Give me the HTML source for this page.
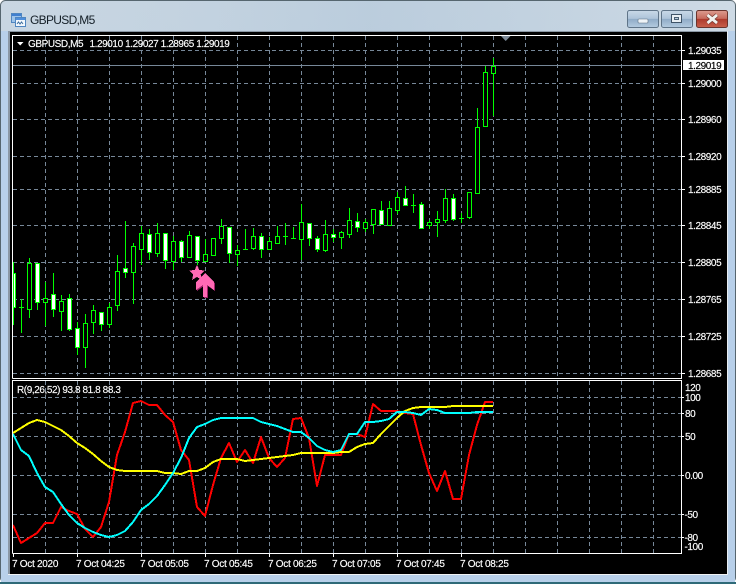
<!DOCTYPE html>
<html>
<head>
<meta charset="utf-8">
<style>
html,body{margin:0;padding:0;background:#fff;width:739px;height:584px;overflow:hidden}
svg{display:block}
text{font-family:"Liberation Sans",sans-serif;font-size:10px;fill:#fff;stroke:#fff;stroke-width:.15px;letter-spacing:-.42px}
.t{letter-spacing:-.28px}
</style>
</head>
<body>
<svg width="739" height="584" viewBox="0 0 739 584" xmlns="http://www.w3.org/2000/svg">
<defs>
<linearGradient id="tb" x1="0" y1="0" x2="0" y2="1"><stop offset="0" stop-color="#c3d2df"/><stop offset="1" stop-color="#b4cbe2"/></linearGradient>
<linearGradient id="tr" x1="0" y1="0" x2="1" y2="0"><stop offset="0" stop-color="#ffffff" stop-opacity=".1"/><stop offset=".5" stop-color="#8fb0cf" stop-opacity=".15"/><stop offset="1" stop-color="#ffffff" stop-opacity=".18"/></linearGradient>
<linearGradient id="btn" x1="0" y1="0" x2="0" y2="1"><stop offset="0" stop-color="#c9d9e8"/><stop offset=".48" stop-color="#adc3d9"/><stop offset=".5" stop-color="#8fabc7"/><stop offset="1" stop-color="#b4cbe0"/></linearGradient>
<linearGradient id="cls" x1="0" y1="0" x2="0" y2="1"><stop offset="0" stop-color="#dc9c90"/><stop offset=".48" stop-color="#c76a5c"/><stop offset=".5" stop-color="#ad3a2c"/><stop offset="1" stop-color="#c9604c"/></linearGradient>
</defs>

<!-- window -->
<rect x="0.5" y="0.5" width="735" height="582" rx="5" fill="url(#tb)" stroke="#56666f"/>
<rect x="1" y="1" width="734" height="30" fill="url(#tr)"/>
<rect x="1" y="31" width="734" height="551" fill="#b8d0ea"/>
<rect x="0" y="582" width="736" height="2" fill="#2f6a78"/>
<rect x="8" y="31" width="720" height="544" fill="#8b98a5"/>
<rect x="10" y="32" width="718" height="542" fill="#000"/>
<rect x="8" y="574" width="720" height="1" fill="#f0f2f4"/>
<rect x="727" y="31" width="1" height="544" fill="#e8edf2"/>

<!-- title icon -->
<rect x="11.5" y="13.5" width="10" height="9" fill="#9cc3ea" stroke="#4f86c0"/>
<rect x="12" y="14" width="9" height="2" fill="#3f7fd0"/>
<rect x="15.5" y="17.5" width="10" height="9" fill="#f2f8fd" stroke="#4f86c0"/>
<rect x="16" y="18" width="9" height="2" fill="#4f8fdc"/>
<path d="M17 24l1.500-2 1.500 2 1.500-2 1.500 2" fill="none" stroke="#3f6f9f"/>
<text x="30" y="24.200" style="font-size:12px;letter-spacing:-.68px;fill:#141f27;stroke:none">GBPUSD,M5</text>

<!-- buttons -->
<rect x="627.500" y="10.500" width="31" height="17" rx="2" fill="url(#btn)" stroke="#5f7488"/>
<rect x="638" y="19" width="10" height="4" rx="1" fill="#eef3f7" stroke="#5e7286" stroke-width=".6"/>
<rect x="661.500" y="10.500" width="31" height="17" rx="2" fill="url(#btn)" stroke="#5f7488"/>
<g shape-rendering="crispEdges">
<rect x="671.500" y="14.500" width="10" height="8" fill="#e9eff4" stroke="#3f5468"/>
<rect x="674.500" y="17.500" width="4" height="2" fill="#b9cbdb" stroke="#4a6074"/>
</g>
<rect x="696.500" y="10.500" width="31" height="17" rx="2" fill="url(#cls)" stroke="#6a352e"/>
<path d="M707.500 15l9.500 8M717 15l-9.500 8" stroke="#70362e" stroke-width="4.200"/>
<path d="M707.500 15l9.500 8M717 15l-9.500 8" stroke="#f1f1ee" stroke-width="2.800"/>

<!-- grid -->
<g shape-rendering="crispEdges" fill="none" stroke="#778899" stroke-width="1" stroke-dasharray="4 3">
<path d="M13 50.500H681M13 83.500H681M13 119.500H681M13 156.500H681M13 189.500H681M13 225.500H681M13 262.500H681M13 299.500H681M13 336.500H681M13 373.500H681"/>
<path d="M13 397.500H681M13 413.500H681M13 436.500H681M13 475.500H681M13 514.500H681M13 537.500H681"/>
<path d="M45.500 36V378M77.500 36V378M109.500 36V378M141.500 36V378M173.500 36V378M205.500 36V378M237.500 36V378M269.500 36V378M301.500 36V378M333.500 36V378M365.500 36V378M397.500 36V378M429.500 36V378M461.500 36V378M493.500 36V378M525.500 36V378M557.500 36V378M589.500 36V378M621.500 36V378M653.500 36V378"/>
<path d="M45.500 381V553M77.500 381V553M109.500 381V553M141.500 381V553M173.500 381V553M205.500 381V553M237.500 381V553M269.500 381V553M301.500 381V553M333.500 381V553M365.500 381V553M397.500 381V553M429.500 381V553M461.500 381V553M493.500 381V553M525.500 381V553M557.500 381V553M589.500 381V553M621.500 381V553M653.500 381V553"/>
</g>
<path d="M13 65.500H681" stroke="#778899" shape-rendering="crispEdges"/>

<!-- candles -->
<g shape-rendering="crispEdges" stroke="#00ff00" stroke-width="1">
<path fill="none" d="M13.500 262V325M21.500 299V333M29.500 258V318M37.500 263V310M45.500 282V326M53.500 273V317M61.500 295V331M69.500 294V331M77.500 322V355M85.500 314V368M93.500 305V334M101.500 312V331M109.500 303V328M117.500 255V311M125.500 221V278M133.500 243V304M141.500 226V265M149.500 229V260M157.500 223V257M165.500 233V269M173.500 236V270M181.500 240V262M189.500 231V258M197.500 236V265M205.500 239V261M221.500 219V244M229.500 227V263M237.500 245V266M245.500 229V250M253.500 228V250M261.500 233V258M269.500 237V249M277.500 226V243M285.500 223V245M293.500 227V239M301.500 204V260M309.500 223V246M317.500 236V252M325.500 220V252M333.500 229V242M341.500 231V249M349.500 208V238M357.500 213V232M365.500 219V232M373.500 209V234M381.500 201V225M389.500 201V225M397.500 192V214M405.500 186V206M413.500 194V213M421.500 202V228M429.500 220V229M437.500 211V237M445.500 189V223M453.500 194V221M461.500 213V223M469.500 192V219M477.500 108V193M485.500 66V126M493.500 58V116"/>
<path fill="none" d="M19 307.500h5M243 249.500h5M283 236.500h5M291 238.500h5M411 205.500h5M459 218.500h5"/>
<path fill="#000" d="M27.500 263.500h4v46h-4zM43.500 298.500h4v4h-4zM59.500 301.500h4v10h-4zM83.500 323.500h4v24h-4zM91.500 310.500h4v12h-4zM107.500 307.500h4v17h-4zM115.500 271.500h4v34h-4zM131.500 246.500h4v26h-4zM139.500 233.500h4v16h-4zM155.500 233.500h4v20h-4zM171.500 241.500h4v20h-4zM187.500 235.500h4v22h-4zM203.500 254.500h4v7h-4zM211.500 238.500h4v17h-4zM219.500 226.500h4v12h-4zM235.500 250.500h4v4h-4zM251.500 236.500h4v12h-4zM267.500 241.500h4v8h-4zM275.500 236.500h4v7h-4zM299.500 222.500h4v17h-4zM323.500 234.500h4v16h-4zM339.500 232.500h4v5h-4zM347.500 220.500h4v14h-4zM363.500 222.500h4v6h-4zM371.500 209.500h4v15h-4zM387.500 208.500h4v17h-4zM395.500 197.500h4v13h-4zM427.500 222.500h4v3h-4zM435.500 219.500h4v3h-4zM443.500 198.500h4v22h-4zM467.500 192.500h4v25h-4zM475.500 127.500h4v66h-4zM483.500 72.500h4v54h-4zM491.500 66.500h4v7h-4z"/>
<path fill="#fff" d="M13.500 273.500h2v34h-2zM35.500 263.500h4v39h-4zM51.500 294.500h4v15h-4zM67.500 298.500h4v31h-4zM75.500 328.500h4v19h-4zM99.500 312.500h4v12h-4zM123.500 268.500h4v4h-4zM147.500 234.500h4v18h-4zM163.500 233.500h4v27h-4zM179.500 241.500h4v16h-4zM195.500 236.500h4v24h-4zM227.500 227.500h4v26h-4zM259.500 236.500h4v13h-4zM307.500 223.500h4v15h-4zM315.500 238.500h4v11h-4zM331.500 234.500h4v3h-4zM355.500 221.500h4v6h-4zM379.500 210.500h4v14h-4zM403.500 198.500h4v7h-4zM419.500 204.500h4v24h-4zM451.500 198.500h4v21h-4z"/>
</g>

<!-- star + arrow -->
<g shape-rendering="crispEdges">
<polygon points="197,265 199.300,270 205,270.500 200.700,274.300 202,280 197,277 192,280 193.300,274.300 189,270.500 194.700,270" fill="#ff69b4"/>
<polygon points="205,274 215,283 215,291 208,286 208,298 204,298 204,286 197,291 197,283" fill="#a0206a"/>
<polygon points="205,273 214,282 214,290 207,285 207,297 203,297 203,285 196,290 196,282" fill="#ff69b4"/>
</g>

<!-- indicator lines -->
<g fill="none" stroke-width="2" shape-rendering="crispEdges" stroke-linejoin="round">
<polyline stroke="#ff0000" points="13,525 21,543 29,538 37,533 45,523 53,523 61,507 69,511 77,514 85,529 93,537 101,527 109,502 117,455 125,432 133,403 141,401 149,405 157,405 165,415 173,422 181,450 189,460 197,507 205,516 213,485 221,458 229,443 237,462 245,450 253,463 261,437 269,458 277,467 285,458 293,419 301,418 309,438 317,486 325,455 333,455 341,455 349,434 357,434 365,437 373,404 381,411 389,411 397,411 405,413 413,414 421,445 429,473 437,491 445,471 453,499 461,499 469,455 477,425 485,402 493,402"/>
<polyline stroke="#ffff00" points="13,433 21,428 29,423 37,420 45,422 53,426 61,430 69,436 77,443 85,448 93,454 101,461 109,467 117,470 125,471 133,471 141,471 149,471 157,471 165,473 173,473 181,474 189,471 197,471 205,468 213,462 221,459 229,459 237,459 245,461 253,460 261,459 269,458 277,457 285,456 293,455 301,453 309,453 317,453 325,453 333,453 341,452 349,452 357,447 365,444 373,443 381,434 389,426 397,418 405,411 413,408 421,407 429,407 437,407 445,407 453,406 461,406 469,406 477,406 485,406 493,406"/>
<polyline stroke="#00ffff" points="13,434 21,450 29,456 37,473 45,487 53,492 61,504 69,515 77,523 85,528 93,532 101,535 109,537 117,535 125,531 133,522 141,510 149,504 157,496 165,485 173,473 181,458 189,438 197,427 205,424 213,420 221,418 229,418 237,418 245,418 253,418 261,422 269,424 277,426 285,429 293,432 301,432 309,438 317,446 325,450 333,452 341,450 349,434 357,434 365,422 373,422 381,421 389,419 397,412 405,412 413,413 421,415 429,409 437,410 445,413 453,413 461,413 469,413 477,412 485,412 493,412"/>
</g>

<!-- frames -->
<g shape-rendering="crispEdges" fill="none" stroke="#fff">
<path d="M12.500 378.500V35.500H681.500V378.500H12.500"/>
<path d="M12.500 553.500V380.500H681.500V553.500H12.500"/>
<path d="M13.500 554V557M77.500 554V557M141.500 554V557M205.500 554V557M269.500 554V557M333.500 554V557M397.500 554V557M461.500 554V557"/>
<path d="M682 50.500H685M682 83.500H685M682 119.500H685M682 156.500H685M682 189.500H685M682 225.500H685M682 262.500H685M682 299.500H685M682 336.500H685M682 373.500H685M682 397.500H684M682 413.500H684M682 436.500H684M682 475.500H684M682 514.500H684M682 537.500H684"/>
</g>
<polygon points="501,36 510.500,36 505.700,41" fill="#7d8b99"/>
<polygon points="17,42 23.500,42 20.200,45.500" fill="#fff"/>

<!-- labels -->
<text x="28" y="47">GBPUSD,M5</text>
<text x="89.500" y="47">1.29010 1.29027 1.28965 1.29019</text>
<text x="17" y="393">R(9,26,52) 93.8 81.8 88.3</text>

<text x="688" y="54">1.29035</text>
<rect x="683" y="60" width="41" height="10" fill="#fff"/>
<text x="688" y="69" style="fill:#000;stroke:#000">1.29019</text>
<text x="688" y="87">1.29000</text>
<text x="688" y="123">1.28960</text>
<text x="688" y="160">1.28920</text>
<text x="688" y="193">1.28885</text>
<text x="688" y="229">1.28845</text>
<text x="688" y="266">1.28805</text>
<text x="688" y="303">1.28765</text>
<text x="688" y="340">1.28725</text>
<text x="688" y="377">1.28685</text>

<text x="685" y="391">120</text>
<text x="685" y="401">100</text>
<text x="685" y="417">80</text>
<text x="685" y="440">50</text>
<text x="685" y="479">0.00</text>
<text x="684.500" y="518">-50</text>
<text x="684.500" y="541">-80</text>
<text x="684.500" y="550">-100</text>

<text class="t" x="12" y="567">7 Oct 2020</text>
<text class="t" x="76" y="567">7 Oct 04:25</text>
<text class="t" x="140" y="567">7 Oct 05:05</text>
<text class="t" x="204" y="567">7 Oct 05:45</text>
<text class="t" x="268" y="567">7 Oct 06:25</text>
<text class="t" x="332" y="567">7 Oct 07:05</text>
<text class="t" x="396" y="567">7 Oct 07:45</text>
<text class="t" x="460" y="567">7 Oct 08:25</text>
</svg>
</body>
</html>
